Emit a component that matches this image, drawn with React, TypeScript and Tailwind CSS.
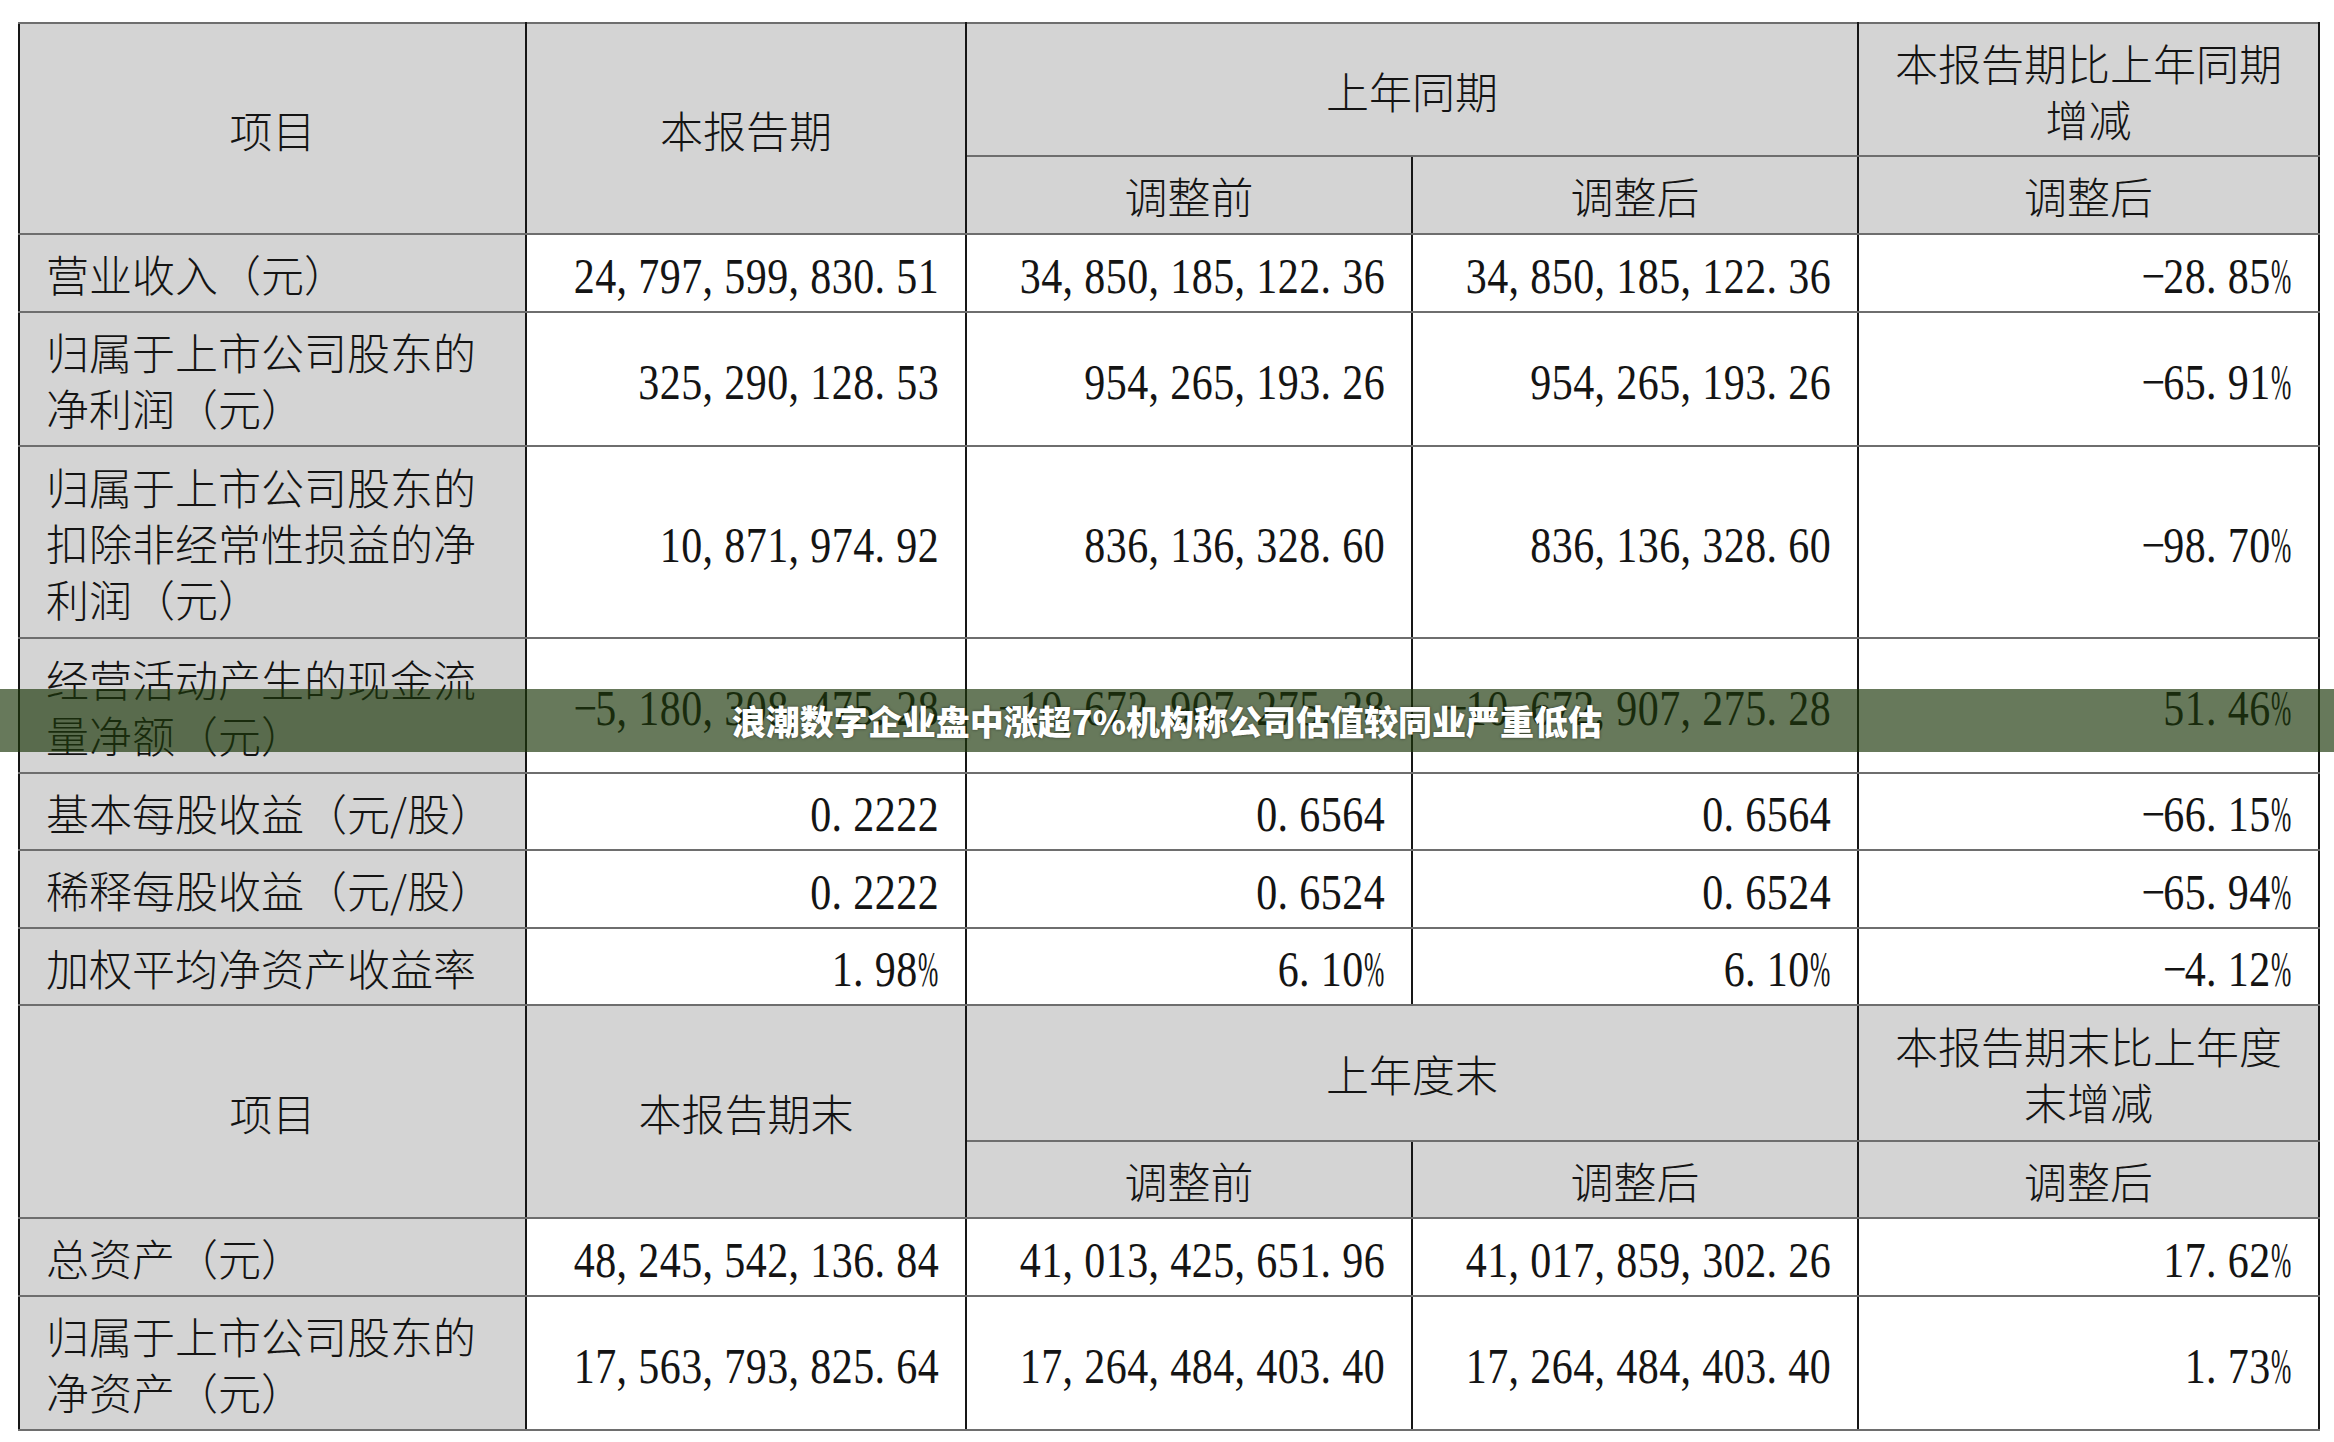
import React from "react";

const cjk = "font-['Noto_Sans_CJK_SC',sans-serif]";

// SimSun style: every digit / comma / period takes half an em
const Num = ({ v }: { v: string }) => (
  <span className="inline-block scale-y-[1.2] font-['Liberation_Serif',serif] text-[42px]">
    {v.split("").map((ch, i) =>
      ch === "%" ? (
        <span key={i} className="inline-block w-[21.5px] text-left">
          <span className="inline-block origin-left scale-x-[0.58]">%</span>
        </span>
      ) : (
        <span
          key={i}
          className={`inline-block w-[21.5px] ${ch === "," || ch === "." ? "text-left" : "text-center"}`}
        >
          {ch === "-" ? "−" : ch}
        </span>
      )
    )}
  </span>
);

type Row = { label: React.ReactNode; vals: string[]; h: string };

const topRows: Row[] = [
  { label: "营业收入（元）", vals: ["24,797,599,830.51", "34,850,185,122.36", "34,850,185,122.36", "-28.85%"], h: "h-[78px]" },
  {
    label: (
      <>
        归属于上市公司股东的
        <br />
        净利润（元）
      </>
    ),
    vals: ["325,290,128.53", "954,265,193.26", "954,265,193.26", "-65.91%"],
    h: "h-[134px]",
  },
  {
    label: (
      <>
        归属于上市公司股东的
        <br />
        扣除非经常性损益的净
        <br />
        利润（元）
      </>
    ),
    vals: ["10,871,974.92", "836,136,328.60", "836,136,328.60", "-98.70%"],
    h: "h-[192px]",
  },
  {
    label: (
      <>
        经营活动产生的现金流
        <br />
        量净额（元）
      </>
    ),
    vals: ["-5,180,308,475.28", "-10,672,907,275.28", "-10,672,907,275.28", "51.46%"],
    h: "h-[135px]",
  },
  { label: "基本每股收益（元/股）", vals: ["0.2222", "0.6564", "0.6564", "-66.15%"], h: "h-[77px]" },
  { label: "稀释每股收益（元/股）", vals: ["0.2222", "0.6524", "0.6524", "-65.94%"], h: "h-[78px]" },
  { label: "加权平均净资产收益率", vals: ["1.98%", "6.10%", "6.10%", "-4.12%"], h: "h-[77px]" },
];

const bottomRows: Row[] = [
  { label: "总资产（元）", vals: ["48,245,542,136.84", "41,013,425,651.96", "41,017,859,302.26", "17.62%"], h: "h-[78px]" },
  {
    label: (
      <>
        归属于上市公司股东的
        <br />
        净资产（元）
      </>
    ),
    vals: ["17,563,793,825.64", "17,264,484,403.40", "17,264,484,403.40", "1.73%"],
    h: "h-[134px]",
  },
];

const head = "bg-[#d4d4d4] border-x-2 border-x-[#161616] border-y-2 border-y-[#6e6e6e] text-center align-middle p-0";
const lab = "bg-[#d4d4d4] border-x-2 border-x-[#161616] border-y-2 border-y-[#6e6e6e] text-left align-middle pl-[26px] pr-2 py-0";
const val = "bg-white border-x-2 border-x-[#161616] border-y-2 border-y-[#6e6e6e] text-right align-middle pr-[26px] pl-0 py-0 whitespace-nowrap";

const Header = ({ period, prior, change, top, sub }: { period: string; prior: string; change: React.ReactNode; top: string; sub: string }) => (
  <>
    <tr className={top}>
      <td rowSpan={2} className={head}>项目</td>
      <td rowSpan={2} className={head}>{period}</td>
      <td colSpan={2} className={head}>{prior}</td>
      <td className={head}>{change}</td>
    </tr>
    <tr className={sub}>
      <td className={head}>调整前</td>
      <td className={head}>调整后</td>
      <td className={head}>调整后</td>
    </tr>
  </>
);

const Body = ({ rows }: { rows: Row[] }) => (
  <>
    {rows.map((r, i) => (
      <tr key={i} className={r.h}>
        <td className={lab}>{r.label}</td>
        {r.vals.map((v, j) => (
          <td key={j} className={val}>
            <Num v={v} />
          </td>
        ))}
      </tr>
    ))}
  </>
);

export default function App() {
  return (
    <div className={`relative w-[2334px] h-[1442px] bg-white overflow-hidden text-[#141414] ${cjk}`}>
      <div className="pt-[22px] pl-[18px]">
        <table className="table-fixed border-collapse w-[2300px] border-2 border-[#161616] text-[43px] leading-[56px] font-light">
          <colgroup>
            <col className="w-[507px]" />
            <col className="w-[440px]" />
            <col className="w-[446px]" />
            <col className="w-[446px]" />
            <col className="w-[461px]" />
          </colgroup>
          <tbody>
            <Header
              period="本报告期"
              prior="上年同期"
              change={
                <>
                  本报告期比上年同期
                  <br />
                  增减
                </>
              }
              top="h-[133px]"
              sub="h-[78px]"
            />
            <Body rows={topRows} />
            <Header
              period="本报告期末"
              prior="上年度末"
              change={
                <>
                  本报告期末比上年度
                  <br />
                  末增减
                </>
              }
              top="h-[136px]"
              sub="h-[77px]"
            />
            <Body rows={bottomRows} />
          </tbody>
        </table>
      </div>

      {/* headline banner over the table */}
      <div className="absolute left-0 top-[689px] w-full h-[63px] bg-[rgba(28,55,10,0.67)] flex items-center justify-center">
        <span className="text-white text-[34px] font-black leading-none [text-shadow:0_0_3px_rgba(0,0,0,0.55)]">
          浪潮数字企业盘中涨超7%机构称公司估值较同业严重低估
        </span>
      </div>
    </div>
  );
}
